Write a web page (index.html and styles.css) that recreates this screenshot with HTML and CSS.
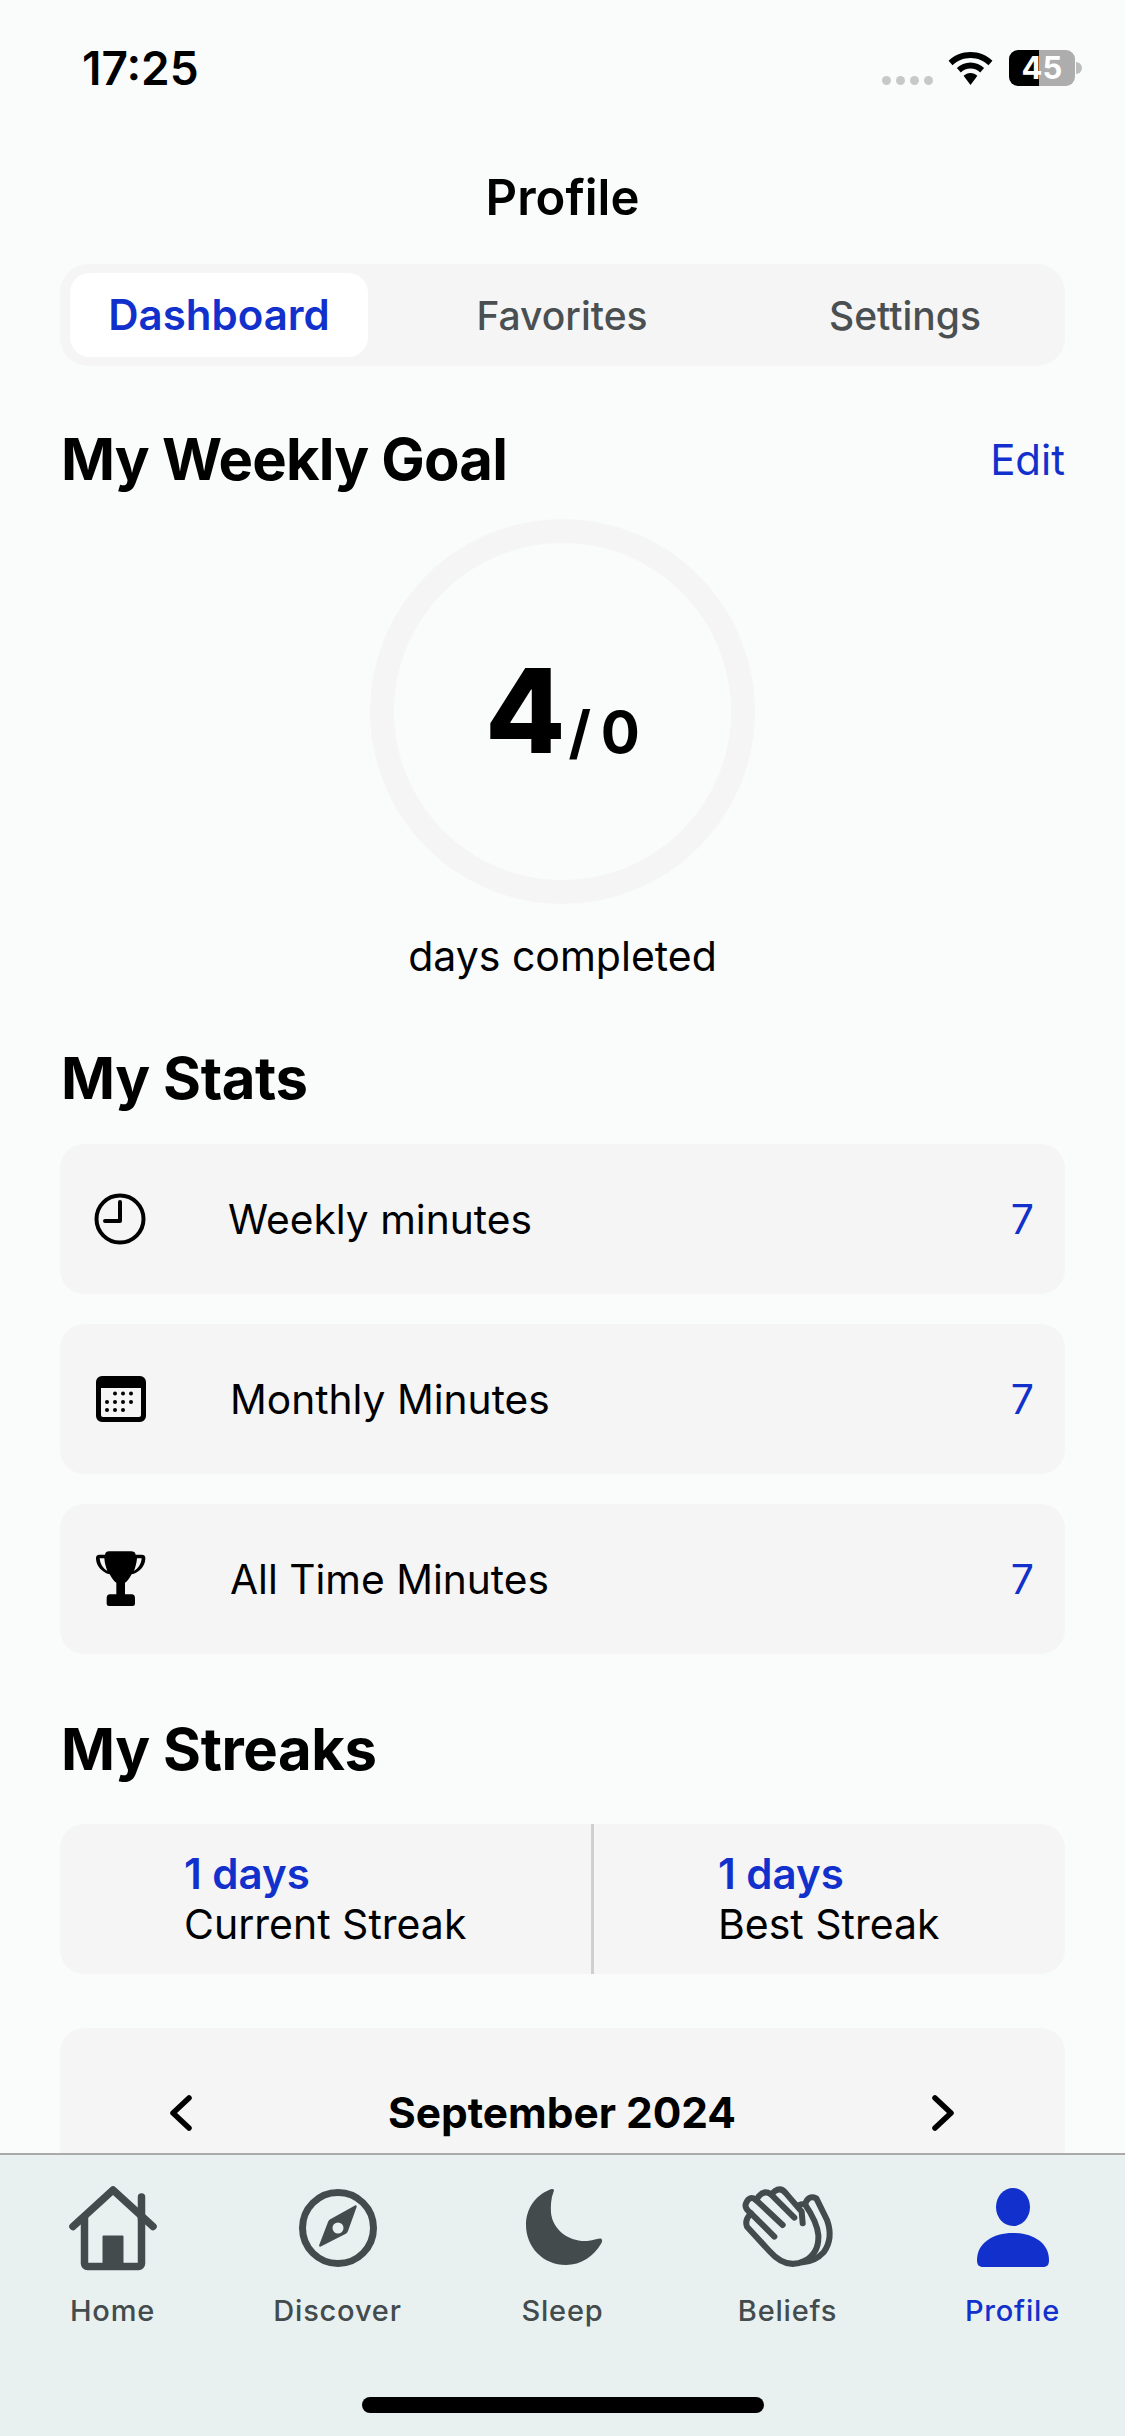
FILE: index.html
```html
<!DOCTYPE html>
<html lang="en">
<head>
    <meta charset="UTF-8">
    <meta name="viewport" content="width=device-width, initial-scale=1.0">
    <title>Profile</title>
    <link rel="stylesheet" href="styles.css">
</head>
<body>
<div class="app">
    <main class="content">
        <div class="status-bar">
            <span class="time">17:25</span>
            <div class="status-icons">
                <div class="signal"><i></i><i></i><i></i><i></i></div>
                <svg class="wifi" viewBox="0 0 45 33">
                    <path d="M22.5 0C14 0 6.300 3.300.6 8.700l3.900 4.600C9.100 8.800 15.500 6 22.500 6s13.400 2.800 18 7.300l3.900-4.600C38.700 3.300 31 0 22.500 0z"/>
                    <path d="M22.500 10.500c-5.300 0-10.100 2.100-13.600 5.500l3.900 4.600c2.500-2.500 5.900-4 9.700-4s7.200 1.500 9.700 4l3.900-4.600c-3.500-3.400-8.300-5.500-13.600-5.500z"/>
                    <path d="M22.500 21c-2.700 0-5.100 1.100-6.900 2.800L22.500 33l6.900-9.200c-1.800-1.700-4.200-2.800-6.900-2.800z"/>
                </svg>
                <div class="battery"><span>45</span></div>
                <div class="battery-nub"></div>
            </div>
        </div>

        <h1 class="page-title">Profile</h1>

        <div class="tabs">
            <div class="tab tab-active">Dashboard</div>
            <div class="tab tab-favorites">Favorites</div>
            <div class="tab tab-settings">Settings</div>
        </div>

        <div class="section-head goal-head">
            <h2>My Weekly Goal</h2>
            <span class="edit">Edit</span>
        </div>

        <div class="ring">
            <span class="ring-done">4</span><span class="ring-total">/ 0</span>
        </div>
        <p class="ring-label">days completed</p>

        <div class="section-head stats-head"><h2>My Stats</h2></div>

        <div class="stat-row">
            <svg class="stat-icon" viewBox="0 0 52 52" fill="none" stroke="#000">
                <circle cx="26" cy="26" r="23.500" stroke-width="4"/>
                <path d="M26 9v19H11" stroke-width="4" stroke-linecap="round" stroke-linejoin="round"/>
            </svg>
            <span class="stat-name stat-name-first">Weekly minutes</span>
            <span class="stat-value">7</span>
        </div>
        <div class="stat-row">
            <svg class="stat-icon" viewBox="-1 0 52 52">
                <path fill-rule="evenodd" d="M7 3h38a6 6 0 0 1 6 6v34a6 6 0 0 1-6 6H7a6 6 0 0 1-6-6V9a6 6 0 0 1 6-6zm-1 12v27a2 2 0 0 0 2 2h36a2 2 0 0 0 2-2V15z"/>
                <g class="cal-dots">
                    <circle cx="20" cy="20.500" r="2"/><circle cx="28" cy="20.500" r="2"/><circle cx="36" cy="20.500" r="2"/>
                    <circle cx="12" cy="29" r="2"/><circle cx="20" cy="29" r="2"/><circle cx="28" cy="29" r="2"/><circle cx="36" cy="29" r="2"/>
                    <circle cx="12" cy="37" r="2"/><circle cx="20" cy="37" r="2"/><circle cx="28" cy="37" r="2"/>
                </g>
            </svg>
            <span class="stat-name">Monthly Minutes</span>
            <span class="stat-value">7</span>
        </div>
        <div class="stat-row">
            <svg class="stat-icon trophy" viewBox="27 32 156 174">
                <path fill-rule="evenodd" d="M72 36H138Q150 36 152 46H170Q182 46 181 58C180 80 165 98 140 105C132 120 125 128 120 130V165H140Q150 165 150 177V193Q150 200 143 200H72Q65 200 65 193V177Q65 165 75 165H94V130C89 128 82 120 74 105C50 98 34 80 33 58Q32 46 44 46H60Q62 36 72 36ZM44 57C45 72 53 87 67 95C62 82 59 70 58 57ZM170 57H156C155 70 152 82 147 95C161 87 169 72 170 57Z"/>
            </svg>
            <span class="stat-name">All Time Minutes</span>
            <span class="stat-value">7</span>
        </div>

        <div class="section-head streaks-head"><h2>My Streaks</h2></div>

        <div class="streaks">
            <div class="streak streak-left">
                <div class="streak-value">1 days</div>
                <div class="streak-name">Current Streak</div>
            </div>
            <div class="streak streak-right">
                <div class="streak-value">1 days</div>
                <div class="streak-name">Best Streak</div>
            </div>
        </div>

        <div class="calendar">
            <div class="calendar-head">
                <svg class="chevron" viewBox="0 0 24 36" fill="none" stroke="#000" stroke-width="5.500" stroke-linecap="round" stroke-linejoin="round"><path d="M20 3L4 18l16 15"/></svg>
                <span class="month">September 2024</span>
                <svg class="chevron" viewBox="0 0 24 36" fill="none" stroke="#000" stroke-width="5.500" stroke-linecap="round" stroke-linejoin="round"><path d="M4 3l16 15L4 33"/></svg>
            </div>
        </div>
    </main>

    <nav class="tabbar">
        <div class="tabbar-items">
            <div class="nav-item">
                <svg class="nav-icon" viewBox="0 0 88 84" fill="none" stroke="#434b4d" stroke-width="7.500" stroke-linecap="round" stroke-linejoin="round">
                    <path d="M4 40.500L44 4l40 36.500"/>
                    <path d="M15.500 31v46.500a3 3 0 0 0 3 3h51a3 3 0 0 0 3-3V31"/>
                    <path d="M72.500 11v22"/>
                    <path d="M34.500 80V50.500h19V80" fill="#434b4d" stroke-width="2"/>
                </svg>
                <span>Home</span>
            </div>
            <div class="nav-item">
                <svg class="nav-icon" viewBox="0 0 84 84" fill="none">
                    <circle cx="42" cy="42" r="35.500" stroke="#434b4d" stroke-width="7"/>
                    <path fill-rule="evenodd" fill="#434b4d" d="M59 19.500c1.200-.5 2 .4 1.600 1.500L52 45c-.6 1.500-1.300 2.300-2.700 3L24.800 60.500c-1.200.5-2-.4-1.600-1.500L32 36c.6-1.500 1.300-2.300 2.700-3zM42 36.500a5.500 5.500 0 1 0 0 11 5.500 5.500 0 0 0 0-11z"/>
                </svg>
                <span>Discover</span>
            </div>
            <div class="nav-item">
                <svg class="nav-icon" viewBox="0 0 84 84">
                    <path fill="#434b4d" d="M28 4C33 1.500 33.500 4 32.500 6C30 12 29.500 20 30 27C32 44 48 56 66 55C71 54.500 75 53 79 52.500C81.500 52.500 81.500 55 80.500 57C73 70 60 79 45 79C22 79 5 61 5 39C5 23 14 10 28 4Z"/>
                </svg>
                <span>Sleep</span>
            </div>
            <div class="nav-item">
                <svg class="nav-icon" viewBox="36 33 270 252" fill="none" stroke="#434b4d" stroke-width="18" stroke-linecap="round" stroke-linejoin="round">
                    <path d="M215 145L212 110L165 55Q150 35 132 48L120 58Q100 45 85 62L75 75Q55 60 45 85Q40 95 52 108L60 115Q40 135 48 155L115 228Q165 285 220 258Q265 235 262 180Q258 140 222 88"/>
                    <path d="M200 92Q215 85 222 88Q232 58 256 70L288 135Q308 190 278 232Q252 260 215 262"/>
                    <path d="M120 58L190 128"/>
                    <path d="M75 75L155 150"/>
                    <path d="M60 115L130 185"/>
                </svg>
                <span>Beliefs</span>
            </div>
            <div class="nav-item nav-item-active">
                <svg class="nav-icon" viewBox="0 0 76 84">
                    <ellipse cx="38" cy="21" rx="17" ry="19" fill="#1231cc"/>
                    <path fill="#1231cc" d="M2 74C2 57 18 47 38 47s36 10 36 27c0 5-2 7-6 7H8c-4 0-6-2-6-7z"/>
                </svg>
                <span>Profile</span>
            </div>
        </div>
        <div class="home-indicator"></div>
    </nav>
</div>
</body>
</html>
```
FILE: styles.css
```css
* {
    box-sizing: border-box;
}
html, body {
    margin: 0;
    padding: 0;
}
body {
    font-family: Inter, "Noto Sans", sans-serif;
    background-color: #fafcfc;
    color: #000;
}
.app {
    width: 1125px;
    height: 2436px;
    display: flex;
    flex-direction: column;
    overflow: hidden;
}
.content {
    flex: 1;
    min-height: 0;
    overflow: hidden;
    padding: 0 60px;
}

/* status bar */
.status-bar {
    display: flex;
    justify-content: space-between;
    align-items: center;
    height: 48px;
    margin-top: 44px;
    padding-left: 22px;
    margin-right: -17px;
}
.time {
    font-size: 46px;
    font-weight: 600;
}
.status-icons {
    display: flex;
    align-items: center;
}
.signal {
    display: flex;
    gap: 5px;
    margin-top: 24px;
    margin-right: 15px;
}
.signal i {
    display: block;
    width: 9px;
    height: 9px;
    border-radius: 50%;
    background-color: #c8c8c8;
}
.wifi {
    width: 45px;
    height: 33px;
    margin-right: 16px;
}
.battery {
    width: 66px;
    height: 36px;
    border-radius: 9px;
    background: linear-gradient(to right, #000 30px, #adadad 30px);
    color: #fff;
    font-size: 31px;
    font-weight: 700;
    line-height: 36px;
    text-align: center;
}
.battery-nub {
    width: 6px;
    height: 12px;
    margin-left: 1px;
    border-radius: 0 6px 6px 0;
    background-color: #bdbdbd;
}

.page-title {
    margin: 76px 0 0;
    font-size: 49px;
    font-weight: 600;
    line-height: 60px;
    text-align: center;
}

/* top tabs */
.tabs {
    display: flex;
    align-items: center;
    height: 102px;
    margin-top: 36px;
    padding: 0 10px;
    border-radius: 28px;
    background-color: #f5f5f6;
}
.tab {
    font-size: 39px;
    font-weight: 500;
    color: #4a4f51;
    text-align: center;
}
.tab-active {
    width: 298px;
    height: 84px;
    line-height: 84px;
    border-radius: 20px;
    background-color: #fff;
    color: #1231cc;
    font-size: 42px;
    font-weight: 600;
}
.tab-favorites {
    width: 388px;
}
.tab-settings {
    width: 298px;
}

.section-head {
    display: flex;
    justify-content: space-between;
    align-items: center;
}
.section-head h2 {
    margin: 0 0 0 1px;
    font-size: 58px;
    font-weight: 700;
    line-height: 70px;
    letter-spacing: -0.4px;
}
.goal-head {
    margin-top: 58px;
}
.goal-head h2 {
    letter-spacing: -0.8px;
}
.stats-head {
    margin-top: 62px;
}
.streaks-head {
    margin-top: 60px;
}
.edit {
    font-size: 42px;
    color: #1231cc;
}

/* goal ring */
.ring {
    display: flex;
    justify-content: center;
    align-items: baseline;
    width: 385px;
    height: 385px;
    margin: 25px auto 0;
    padding-top: 103px;
    border: 24px solid #f5f5f6;
    border-radius: 50%;
}
.ring-done {
    font-size: 117px;
    font-weight: 800;
    line-height: 130px;
}
.ring-total {
    margin-left: 3px;
    font-size: 58px;
    font-weight: 700;
    word-spacing: -4px;
}
.ring-label {
    margin: 27px 0 0;
    font-size: 41px;
    line-height: 50px;
    text-align: center;
}

/* stats */
.stat-row {
    display: flex;
    align-items: center;
    height: 150px;
    margin-top: 30px;
    padding: 0 31px 0 34px;
    border-radius: 24px;
    background-color: #f5f5f6;
}
.stats-head + .stat-row {
    margin-top: 31px;
}
.stat-icon {
    width: 52px;
    height: 52px;
    flex-shrink: 0;
    margin-right: 84px;
}
.stat-icon.trophy {
    height: 58px;
}
.stat-name {
    flex: 1;
    font-size: 40.700px;
}
.stat-name-first {
    margin-left: -2px;
}
.stat-value {
    font-size: 41px;
    color: #1231cc;
}

/* streaks */
.streaks {
    display: flex;
    height: 150px;
    margin-top: 40px;
    border-radius: 24px;
    background-color: #f5f5f6;
}
.streak {
    display: flex;
    flex-direction: column;
    justify-content: center;
    padding-left: 124px;
}
.streak-left {
    width: 534px;
    border-right: 3px solid #cfcfcf;
}
.streak-value {
    font-size: 42px;
    font-weight: 600;
    line-height: 50px;
    color: #1231cc;
}
.streak-name {
    font-size: 41px;
    line-height: 50px;
}

/* calendar, runs under the tab bar */
.calendar {
    height: 400px;
    margin-top: 54px;
    padding-top: 59px;
    border-radius: 24px;
    background-color: #f5f5f6;
}
.calendar-head {
    display: flex;
    justify-content: space-between;
    align-items: center;
    padding: 0 110px 0 109px;
}
.chevron {
    width: 24px;
    height: 36px;
}
.month {
    font-size: 42.400px;
    font-weight: 700;
}

/* bottom tab bar */
.tabbar {
    flex-shrink: 0;
    height: 283px;
    border-top: 2px solid #aaaaaa;
    background-color: #e8f0f0;
}
.tabbar-items {
    display: flex;
    padding-top: 31px;
}
.nav-item {
    flex: 1;
    display: flex;
    flex-direction: column;
    align-items: center;
    color: #434b4d;
    font-size: 29px;
    font-weight: 450;
    letter-spacing: 0.8px;
    line-height: 40px;
}
.nav-icon {
    height: 84px;
    margin-bottom: 21px;
    overflow: visible;
}
.nav-item-active {
    color: #1231cc;
}
.home-indicator {
    width: 402px;
    height: 16px;
    margin: 66px auto 0;
    border-radius: 8px;
    background-color: #000;
}
```
